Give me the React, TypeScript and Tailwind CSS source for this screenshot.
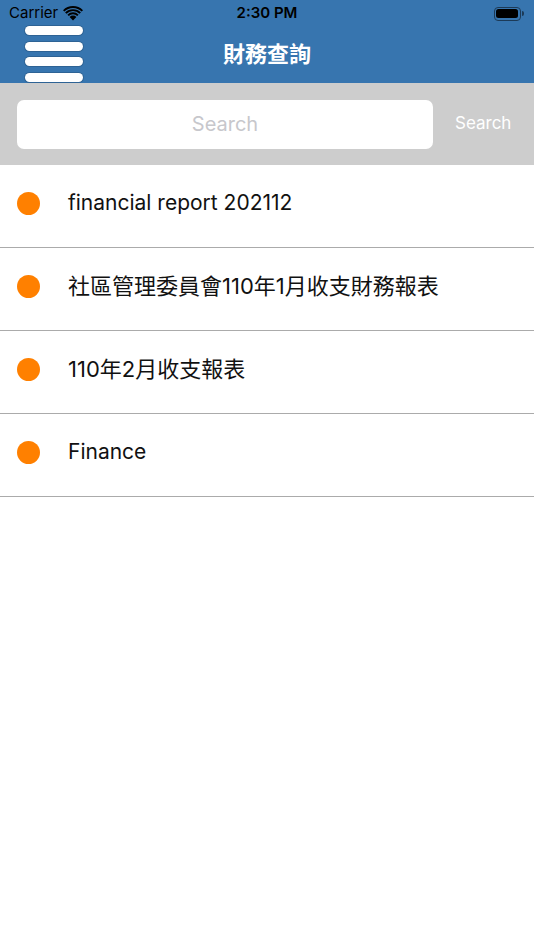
const rows = [
  { title: "financial report 202112", cjk: false },
  { title: "社區管理委員會110年1月收支財務報表", cjk: true },
  { title: "110年2月收支報表", cjk: true },
  { title: "Finance", cjk: false },
];

function Wifi() {
  return (
    <svg width="20" height="15" viewBox="0 0 20 15" fill="#000">
      <path d="M10 14.5 L6.6 11 A4.8 4.8 0 0 1 13.4 11 Z" />
      <path d="M4.4 8.7 A7.9 7.9 0 0 1 15.6 8.7 L14.2 10.1 A5.9 5.9 0 0 0 5.8 10.1 Z" />
      <path d="M2.1 6.4 A11.2 11.2 0 0 1 17.9 6.4 L16.5 7.8 A9.2 9.2 0 0 0 3.5 7.8 Z" />
      <path d="M0 4.2 A14.2 14.2 0 0 1 20 4.2 L18.6 5.6 A12.2 12.2 0 0 0 1.4 5.6 Z" />
    </svg>
  );
}

function Battery() {
  return (
    <div className="flex items-center">
      <div className="flex h-[14px] w-[27px] items-center rounded-[4px] border border-[#1c3a57] p-[1.5px]">
        <div className="h-full w-full rounded-[2.5px] bg-black" />
      </div>
      <div className="ml-[1px] h-[5px] w-[2px] rounded-r-sm bg-[#1c3a57]" />
    </div>
  );
}

export default function App() {
  return (
    <div
      className="flex min-h-[950px] w-[534px] flex-col bg-white"
      style={{ fontFamily: 'Inter, "Noto Sans CJK TC", sans-serif' }}
    >
      <header className="relative h-[83px] bg-[#3775af]">
        <div className="flex h-[27px] items-center justify-between px-[9px]">
          <div className="flex w-[120px] items-center gap-[5px] text-[15px] text-black">
            <span>Carrier</span>
            <Wifi />
          </div>
          <span className="text-[15px] font-semibold text-black">2:30 PM</span>
          <div className="flex w-[120px] justify-end pr-[1px]">
            <Battery />
          </div>
        </div>
        <div className="absolute left-[25px] top-[26px] flex flex-col gap-[6.5px]">
          <div className="h-[9px] w-[58px] rounded-full bg-white shadow-[0_0_0_1px_rgba(0,0,0,0.15)]" />
          <div className="h-[9px] w-[58px] rounded-full bg-white shadow-[0_0_0_1px_rgba(0,0,0,0.15)]" />
          <div className="h-[9px] w-[58px] rounded-full bg-white shadow-[0_0_0_1px_rgba(0,0,0,0.15)]" />
          <div className="h-[9px] w-[58px] rounded-full bg-white shadow-[0_0_0_1px_rgba(0,0,0,0.15)]" />
        </div>
        <div className="flex h-[56px] items-center justify-center pb-[2px]">
          <span className="text-[22px] font-semibold text-white">財務查詢</span>
        </div>
      </header>

      <div className="flex h-[82px] items-center bg-[#cdcdcd] pl-[17px]">
        <div className="flex h-[49px] w-[416px] items-center justify-center rounded-[7px] bg-white">
          <span className="text-[20px] text-[#c7c7cc]">Search</span>
        </div>
        <span className="ml-[22px] text-[17px] text-white">Search</span>
      </div>

      <ul>
        {rows.map((row) => (
          <li
            key={row.title}
            className="flex h-[83px] items-center gap-[28px] border-b border-[#ababab] pb-[6px] pl-[17px]"
          >
            <span className="h-[23px] w-[23px] shrink-0 rounded-full bg-[#ff8000]" />
            <span className={row.cjk ? "text-[22px] text-[#111]" : "text-[21px] text-[#111]"}>
              {row.title}
            </span>
          </li>
        ))}
      </ul>
    </div>
  );
}
